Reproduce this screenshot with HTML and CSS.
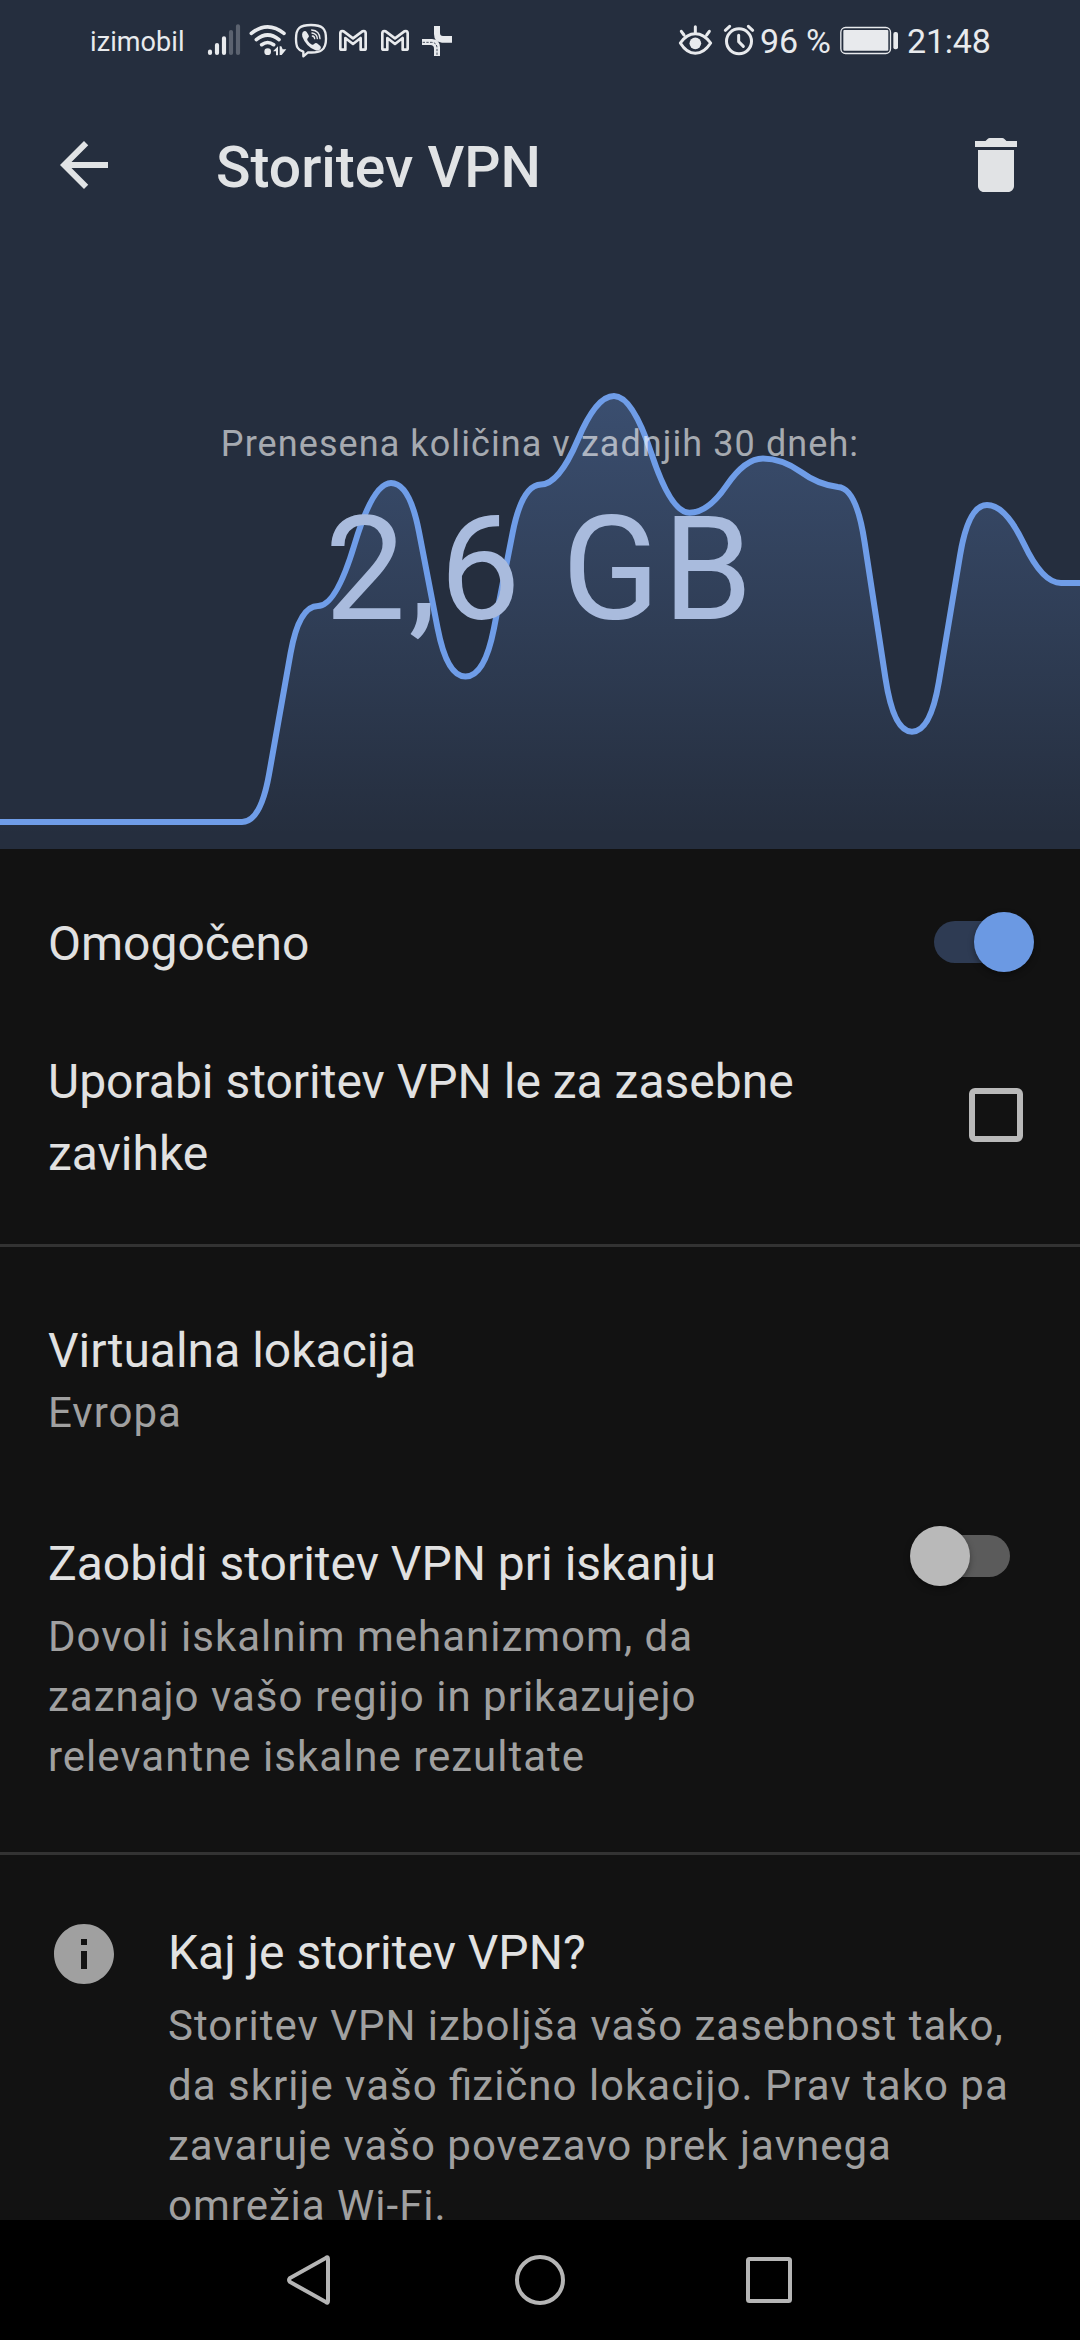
FILE: index.html
```html
<!DOCTYPE html>
<html lang="sl">
<head>
<meta charset="utf-8">
<title>Storitev VPN</title>
<link rel="stylesheet" href="styles.css">
</head>
<body>
<div class="screen">
  <section class="hero">
    <svg class="chart" viewBox="0 0 1080 849" aria-hidden="true">
      <defs>
        <linearGradient id="area" gradientUnits="userSpaceOnUse" x1="0" y1="396" x2="0" y2="835">
          <stop offset="0" stop-color="#6f9de8" stop-opacity=".29"/>
          <stop offset="1" stop-color="#6f9de8" stop-opacity="0"/>
        </linearGradient>
        <path id="curve" d="M-5 822H242Q260.500 822 269 774.500L290.500 653.500Q299 606 318 606Q336 606 354.500 544.500Q373 483 391 483Q409.500 483 418.900 531.400L437.600 628.100Q447 676.500 465.500 676.500Q484.500 676.500 493.900 628.600L512.600 532.900Q522 485 541 484.500Q559 484 577.500 440.500Q596 396 614 396Q632.500 396 651.700 454.400Q671 512.700 689.500 512.700Q708 512.700 726.500 485.600Q745 458.500 763 458.500Q782 458.500 801 472Q818 484.500 838 487Q856.500 488 864.600 542.300L885.400 678Q893.500 731.700 912 731.700Q930.500 731.700 938.900 681.800L960.100 554.900Q968.500 505 987 505Q1005.500 505 1024 544Q1042.500 583 1061 583H1085V860H-5Z"/>
      </defs>
      <use href="#curve" fill="url(#area)"/>
      <use href="#curve" class="chart-line"/>
    </svg>
    <div class="hero-content">
      <div class="status">
        <span class="carrier">izimobil</span>
        <svg class="signal" viewBox="411 69 102 108"><g stroke-width="12.500" stroke-linecap="round"><path d="M420 155v4M441 135v24M462 115v44"/><path opacity=".28" d="M483 96v63M504 79v80"/></g></svg>
        <svg class="wifi" viewBox="537 69 114 108"><g fill="none" stroke-width="11" stroke-linecap="round"><path d="M544 100Q593 61 642 100M559 119Q593 91 627 119M575 134Q593 121 611 134"/></g><circle cx="593" cy="155" r="10" stroke="none"/><path stroke="none" d="M609 154l15-15v27h-6v-12zM629 139h5l4 9h11l-14 17h-6z"/></svg>
        <svg class="viber" viewBox="672 69 102 108"><path fill="none" stroke-width="7" stroke-linejoin="round" d="M723 75C690 75 678 84 678 116C678 141 684 151 700 155V169L714 157C752 160 768 150 768 116C768 84 756 75 723 75Z"/><path stroke="none" d="M698 97q7-8 12-1l6 10q3 5-3 9q-3 3 0 7q5 8 13 12q4 1 7-3q4-4 8-1l9 7q6 5-1 12q-6 5-14 1q-27-11-38-40q-2-8 1-13z"/><path fill="none" stroke-width="4" stroke-linecap="round" d="M725 90q24 2 25 26M726 99q15 2 16 17M727 108q7 1 7 8"/></svg>
        <svg class="mail" viewBox="807 69 84 108"><path fill="none" stroke-width="8" stroke-linejoin="round" d="M811 99V146Q811 149 815 149H826V114L849 132L872 114V149H883Q887 149 887 146V99Q886 91 877 94L849 115L821 94Q812 91 811 99Z"/></svg>
        <svg class="mail second" viewBox="807 69 84 108"><path fill="none" stroke-width="8" stroke-linejoin="round" d="M811 99V146Q811 149 815 149H826V114L849 132L872 114V149H883Q887 149 887 146V99Q886 91 877 94L849 115L821 94Q812 91 811 99Z"/></svg>
        <svg class="roads" viewBox="1053 69 96 108"><path stroke="none" d="M1092 78h18v21q0 9 9 9h27v20h-30q-24-2-24-26zM1056 117h30q24 2 24 25v26h-18v-22q0-11-11-11h-25z"/><path class="road-mark" d="M1058 127h25q18 0 18 18v22"/></svg>
        <svg class="eye" viewBox="54 69 105 108"><path fill="none" stroke-width="9" stroke-linejoin="round" stroke-linecap="round" d="M61 129Q80 101 106 101T152 129Q132 160 106 160T61 129ZM106 80V99M64 94L72 105M148 94L140 105"/><circle cx="106" cy="130" r="17.500" stroke="none"/></svg>
        <svg class="alarm" viewBox="189 69 96 108"><circle cx="237" cy="124" r="37.500" fill="none" stroke-width="9"/><path fill="none" stroke-width="9" stroke-linecap="round" stroke-linejoin="round" d="M236 106V125L250 139M196 91L209 79M278 91L265 79"/></svg>
        <span class="percent">96 %</span>
        <svg class="battery" viewBox="540 69 177 108"><rect x="542.500" y="82.500" width="149" height="78" rx="14" fill="none" stroke-width="4"/><rect x="550" y="90" width="135" height="62" rx="3" stroke="none"/><rect x="700" y="96" width="14" height="52" rx="6" stroke="none"/></svg>
        <span class="clock">21:48</span>
      </div>
      <header class="appbar">
        <svg class="icon" viewBox="0 0 24 24"><path d="M20 11H7.830l5.590-5.590L12 4l-8 8 8 8 1.410-1.410L7.830 13H20z"/></svg>
        <h1 class="title">Storitev VPN</h1>
        <svg class="icon" viewBox="0 0 24 24"><path d="M6 19c0 1.100.9 2 2 2h8c1.100 0 2-.9 2-2V7H6zM19 4h-3.500l-.7-.7q-.3-.3-.7-.3h-4.200q-.4 0-.7.3l-.7.7H5v2h14z"/></svg>
      </header>
      <p class="usage-label">Prenesena količina v zadnjih 30 dneh:</p>
      <p class="usage-value">2,6 GB</p>
    </div>
  </section>

  <main class="settings">
    <section class="group toggles">
      <div class="row enabled">
        <span class="name">Omogočeno</span>
        <span class="switch on"></span>
      </div>
      <div class="row private">
        <span class="name">Uporabi storitev VPN le za zasebne zavihke</span>
        <span class="checkbox"></span>
      </div>
    </section>
    <section class="group options">
      <div class="location">
        <div class="name compact">Virtualna lokacija</div>
        <div class="detail">Evropa</div>
      </div>
      <div class="row bypass">
        <div class="bypass-text">
          <div class="name">Zaobidi storitev VPN pri iskanju</div>
          <p class="detail spaced">Dovoli iskalnim mehanizmom, da zaznajo vašo regijo in prikazujejo relevantne iskalne rezultate</p>
        </div>
        <span class="switch off"></span>
      </div>
    </section>
    <section class="about">
      <svg class="icon info" viewBox="0 0 24 24"><path d="M12 2C6.480 2 2 6.480 2 12s4.480 10 10 10 10-4.480 10-10S17.520 2 12 2zm1 15h-2v-6h2v6zm0-8h-2V7h2v2z"/></svg>
      <div class="about-text">
        <div class="name">Kaj je storitev VPN?</div>
        <p class="detail spaced">Storitev VPN izboljša vašo zasebnost tako, da skrije vašo <span class="lig">fi</span>zično lokacijo. Prav tako pa zavaruje vašo povezavo prek javnega omrežja Wi-Fi.</p>
      </div>
    </section>
  </main>

  <nav class="navbar">
    <svg viewBox="0 0 60 60"><path d="M45 8Q47 6 47 9V51Q47 54 45 52L9 32Q7 30 9 28Z"/></svg>
    <svg viewBox="0 0 60 60"><circle cx="30" cy="30" r="23"/></svg>
    <svg viewBox="0 0 60 60"><rect x="9" y="9" width="42" height="42" rx="1.500"/></svg>
  </nav>
</div>
</body>
</html>
```
FILE: styles.css
```css
* { box-sizing: border-box; }

body {
  margin: 0;
  background: #000;
  font-family: Roboto, "Noto Sans", sans-serif;
}

h1, p { margin: 0; }
svg { display: block; flex: none; }

.screen {
  width: 1080px;
  height: 2340px;
  display: flex;
  flex-direction: column;
  overflow: hidden;
}

/* Header with the usage chart behind it */
.hero {
  flex: none;
  height: 849px;
  display: grid;
  background: #252e3e;
}
.chart, .hero-content { grid-area: 1 / 1; width: 1080px; }
.chart { height: 849px; }
.chart-line { fill: none; stroke: #6f9de8; stroke-width: 6; }
.hero-content { z-index: 1; }

.status {
  height: 90px;
  padding-left: 90px;
  display: flex;
  align-items: flex-start;
  color: #e8eaed;
}
.status svg {
  height: 36px;
  margin-top: 23px;
  fill: #e8eaed;
  stroke: #e8eaed;
}
.carrier { width: 117px; margin-top: 26px; font-size: 27px; line-height: 32px; letter-spacing: 0.1px; }
.status .signal { width: 34px; }
.status .wifi { width: 38px; margin-left: 8px; }
.status .viber { width: 34px; margin-left: 7px; }
.status .mail { width: 28px; margin-left: 11px; }
.status .second { margin-left: 14px; }
.status .roads { width: 32px; margin-left: 12px; }
.status .road-mark { fill: none; stroke: #252e3e; stroke-width: 2.500; stroke-dasharray: 7 4; }
.status .eye { width: 35px; margin-left: 225px; }
.status .alarm { width: 32px; margin-left: 10px; }
.status .battery { width: 59px; }
.percent, .clock {
  margin-top: 21px;
  font-size: 34px;
  line-height: 40px;
  letter-spacing: -0.2px;
  white-space: nowrap;
}
.percent { width: 80px; margin-left: 5px; }
.clock { margin-left: 8px; }

.appbar {
  height: 150px;
  padding: 0 48px;
  display: flex;
  align-items: center;
}
.icon { width: 72px; height: 72px; fill: #e1e3e5; }
.title {
  flex: 1;
  margin: 5px 0 0 96px;
  font-size: 57px;
  line-height: 67px;
  font-weight: 500;
  color: #e1e3e5;
}

.usage-label, .usage-value { text-align: center; }
.usage-label {
  margin-top: 182px;
  font-size: 36px;
  line-height: 44px;
  letter-spacing: 1.080px;
  color: rgba(255, 255, 255, .6);
}
.usage-value {
  margin-top: 19px;
  font-size: 144px;
  line-height: 169px;
  letter-spacing: 2.800px;
  color: #a9bbdd;
}

/* Settings list */
.settings {
  flex: 1;
  min-height: 0;
  overflow: hidden;
  background: #121212;
}
.group { border-bottom: 3px solid #333; }
.row { display: flex; justify-content: space-between; }
.name { font-size: 48px; line-height: 72px; color: #e1e1e1; }
.name.compact { line-height: 57px; margin-bottom: 4px; }
.detail { font-size: 42px; line-height: 60px; letter-spacing: 1px; color: #a0a0a0; }
.detail.spaced { margin-top: 7px; }
.lig { letter-spacing: 0; }

.toggles { height: 398px; padding: 59px 46px 0 48px; }
.enabled { height: 138px; }
.private .name { width: 780px; }

.switch {
  flex: none;
  width: 100px;
  height: 42px;
  display: flex;
  align-items: center;
}
.switch::before {
  content: "";
  width: 96px;
  height: 42px;
  border-radius: 21px;
}
.switch::after {
  content: "";
  z-index: 1;
  flex: none;
  width: 60px;
  height: 60px;
  border-radius: 50%;
  box-shadow: 0 3px 6px rgba(0, 0, 0, .35);
}
.switch.on { margin-top: 13px; }
.switch.on::before { background: #2e3b53; margin-right: -56px; }
.switch.on::after { background: #6b99e3; }
.switch.off { margin: 7px 24px 0 0; flex-direction: row-reverse; }
.switch.off::before { background: #5b5b5b; margin-left: -56px; }
.switch.off::after { background: #b9b9b9; }

.checkbox {
  flex: none;
  width: 54px;
  height: 54px;
  margin: 42px 11px 0 0;
  border: 6px solid #b9b9b9;
  border-radius: 6px;
}

.options { height: 608px; padding: 75px 46px 0 48px; }
.bypass { margin-top: 85px; }
.bypass-text { width: 690px; }

.about { padding: 62px 48px 0; display: flex; gap: 48px; }
.info { margin-top: 1px; fill: #a0a0a0; }
.about-text { width: 860px; }

.navbar {
  flex: none;
  height: 120px;
  padding: 0 281px;
  display: flex;
  align-items: center;
  justify-content: space-between;
  background: #000;
}
.navbar svg { width: 60px; height: 60px; fill: none; stroke: #b5b5b5; stroke-width: 4; }
```
